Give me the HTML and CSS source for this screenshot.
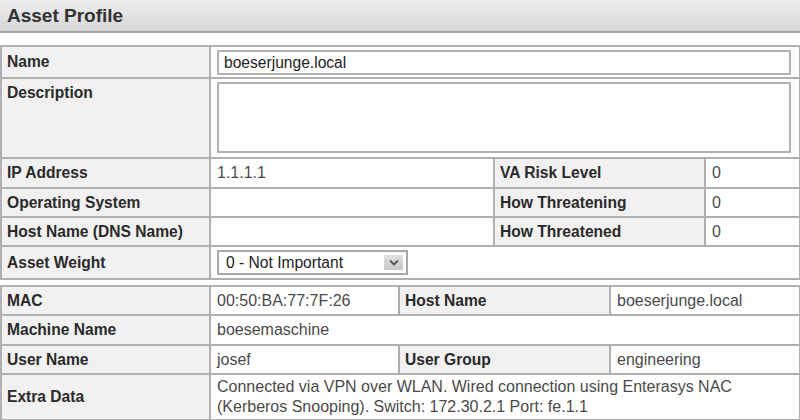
FILE: index.html
```html
<!DOCTYPE html>
<html>
<head>
<meta charset="utf-8">
<link rel="stylesheet" href="styles.css">
</head>
<body>
<div class="panel-head">Asset Profile</div>
<table class="grid t1">
  <colgroup><col class="c1"><col class="c2"><col class="c3"><col class="c4"></colgroup>
  <tr class="r-name"><th>Name</th><td colspan="3"><div class="field">boeserjunge.local</div></td></tr>
  <tr class="r-desc"><th class="top">Description</th><td colspan="3"><div class="area"></div></td></tr>
  <tr class="r30"><th>IP Address</th><td>1.1.1.1</td><th>VA Risk Level</th><td>0</td></tr>
  <tr class="r29"><th>Operating System</th><td></td><th>How Threatening</th><td>0</td></tr>
  <tr class="r29"><th>Host Name (DNS Name)</th><td></td><th>How Threatened</th><td>0</td></tr>
  <tr class="r-weight"><th>Asset Weight</th><td colspan="3"><div class="select"><span>0 - Not Important</span><span class="arrow"><svg width="10" height="7" viewBox="0 0 10 7"><path d="M1 1.5 L5 5.5 L9 1.5" fill="none" stroke="#555" stroke-width="1.8"/></svg></span></div></td></tr>
</table>
<table class="grid t2">
  <colgroup><col class="d1"><col class="d2"><col class="d3"><col class="d4"></colgroup>
  <tr class="r29"><th>MAC</th><td>00:50:BA:77:7F:26</td><th>Host Name</th><td>boeserjunge.local</td></tr>
  <tr class="r30"><th>Machine Name</th><td colspan="3">boesemaschine</td></tr>
  <tr class="r29"><th>User Name</th><td>josef</td><th>User Group</th><td>engineering</td></tr>
  <tr class="r-extra"><th>Extra Data</th><td colspan="3">Connected via VPN over WLAN. Wired connection using Enterasys NAC<br>(Kerberos Snooping). Switch: 172.30.2.1 Port: fe.1.1</td></tr>
</table>
</body>
</html>
```
FILE: styles.css
```css
html, body {
  margin: 0;
  padding: 0;
  background: #ffffff;
  font-family: "Liberation Sans", Arial, sans-serif;
}
.panel-head {
  height: 31px;
  line-height: 31px;
  padding-left: 7px;
  font-size: 19px;
  font-weight: bold;
  color: #333333;
  background: linear-gradient(#efefef, #d6d6d6);
  border-bottom: 2px solid #a4a4a4;
  margin-bottom: 12px;
}
.grid {
  border-collapse: collapse;
  table-layout: fixed;
  width: 799px;
  font-size: 15.6px;
}
.t2 { margin-top: 5px; }
.grid th, .grid td {
  border: 2px solid #b0b0b0;
  padding: 0 6px;
  vertical-align: middle;
  white-space: nowrap;
}
.grid th {
  background: #f1f1f1;
  color: #2a2a2a;
  text-align: left;
  font-weight: bold;
  padding-left: 5px;
}
.grid td {
  color: #4a4a4a;
  background: #ffffff;
  font-size: 16px;
}
.grid th.top { vertical-align: top; padding-top: 5px; }
.c1 { width: 209px; }
.c2 { width: 284px; }
.c3 { width: 211px; }
.c4 { width: 95px; }
.d1 { width: 209px; }
.d2 { width: 189px; }
.d3 { width: 211px; }
.d4 { width: 190px; }
.r-name { height: 32px; }
.r-desc { height: 80px; }
.r30 { height: 30px; }
.r29 { height: 29px; }
.r-weight { height: 33px; }
.r-extra { height: 46px; }
.r-extra td { white-space: normal; line-height: 20px; }
.field {
  height: 21px;
  line-height: 21px;
  border: 2px solid #b2b2b2;
  padding: 0 5px;
  margin-right: 2px;
  color: #222;
  font-size: 15.6px;
}
.r-desc td { vertical-align: top; padding-top: 3px; }
.area {
  height: 67px;
  border: 2px solid #b2b2b2;
  margin-right: 2px;
}
.select {
  box-sizing: border-box;
  width: 191px;
  height: 25px;
  border: 2px solid #a8a8a8;
  display: flex;
  align-items: center;
  justify-content: space-between;
  padding: 0 3px 0 7px;
  color: #222;
  font-size: 15.6px;
}
.select .arrow {
  width: 19px;
  height: 15px;
  background: linear-gradient(#e0e0e0, #c8c8c8);
  display: flex;
  align-items: center;
  justify-content: center;
}
```
